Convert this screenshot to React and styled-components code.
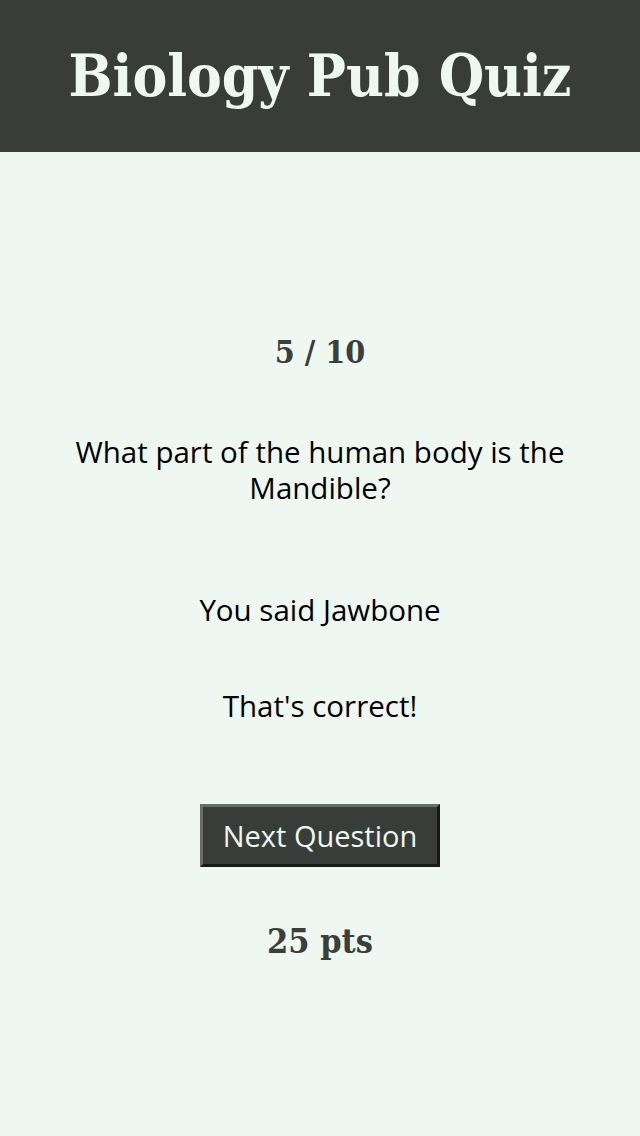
import React from "react";
import styled, { createGlobalStyle } from "styled-components";

const GlobalStyle = createGlobalStyle`
  html, body {
    margin: 0;
    padding: 0;
    background: #eef8f0;
  }
  body {
    font-family: "Open Sans", "Noto Sans", sans-serif;
    color: #000;
  }
`;

const Header = styled.header`
  height: 152px;
  background: #383d39;
  display: flex;
  align-items: center;
  justify-content: center;
`;

const Title = styled.h1`
  margin: 0;
  font-family: "DejaVu Serif Condensed", "DejaVu Serif", serif;
  font-weight: bold;
  font-size: 58px;
  color: #eef8f0;
`;

const Main = styled.main`
  display: flex;
  flex-direction: column;
  align-items: center;
  padding: 180px 50px 0;
  text-align: center;
`;

const Slab = styled.div`
  margin-top: ${(p) => p.mt || 0}px;
  font-family: "DejaVu Serif Condensed", "DejaVu Serif", serif;
  font-weight: bold;
  font-size: ${(p) => p.size || 32}px;
  color: #3a3f3b;
  line-height: 40px;
`;

const Text = styled.p`
  margin: ${(p) => p.mt}px 0 0;
  font-size: 29.5px;
  line-height: 36px;
`;

const Button = styled.button`
  margin-top: 80px;
  height: 63px;
  padding: 0 20px;
  background: #383d39;
  color: #eef8f0;
  font-family: "Open Sans", "Noto Sans", sans-serif;
  font-size: 29px;
  border: 3px outset #6a6d6a;
`;

export default function App() {
  return (
    <>
      <GlobalStyle />
      <Header>
        <Title>Biology Pub Quiz</Title>
      </Header>
      <Main>
        <Slab>5 / 10</Slab>
        <Text mt={62}>What part of the human body is the Mandible?</Text>
        <Text mt={86}>You said Jawbone</Text>
        <Text mt={60}>That's correct!</Text>
        <Button>Next Question</Button>
        <Slab mt={54} size={34}>25 pts</Slab>
      </Main>
    </>
  );
}
